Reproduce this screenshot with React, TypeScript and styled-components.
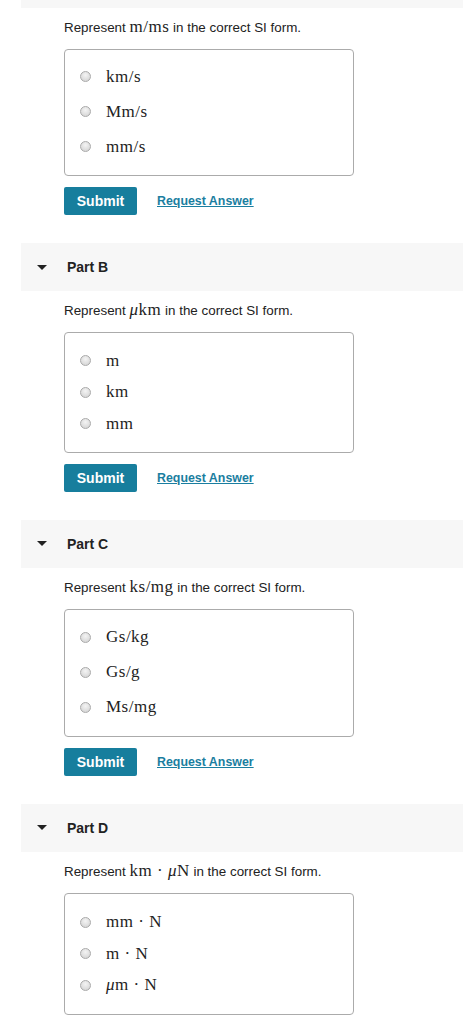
import React from 'react'
import styled, { createGlobalStyle } from 'styled-components'

const GlobalStyle = createGlobalStyle`
	body {
		margin: 0;
		background: #fff;
		font-family: "Liberation Sans", Arial, sans-serif;
		color: #222;
	}
`

const Page = styled.div`
	width: 463px;
	overflow: hidden;
`

const Part = styled.section`
	margin-left: 21px;
`

const Header = styled.div`
	height: 48px;
	background: #f7f7f7;
	display: flex;
	align-items: center;
	padding-left: 16px;
	gap: 20px;
`

const TopBar = styled.div`
	height: 8px;
	background: #f7f7f7;
`

const Caret = styled.span`
	width: 0;
	height: 0;
	border-left: 5px solid transparent;
	border-right: 5px solid transparent;
	border-top: 5px solid #222;
`

const HeaderTitle = styled.h3`
	margin: 0;
	font-size: 14px;
	font-weight: bold;
	color: #222;
`

const Body = styled.div`
	padding: 10px 0 28px 43px;
`

const Question = styled.p`
	margin: 0 0 12px;
	font-size: 13.4px;
	line-height: 18px;
	color: #222;
`

const Math = styled.span`
	font-family: "Liberation Serif", "Times New Roman", serif;
	font-size: 17px;
	letter-spacing: 0.5px;
`

const Mu = styled.i`
	font-family: "Liberation Serif", "Times New Roman", serif;
`

const Choices = styled.div<{ $padTop: number; $padBottom: number }>`
	width: 290px;
	box-sizing: border-box;
	border: 1px solid #ababab;
	border-radius: 4px;
	padding: ${p => p.$padTop}px 15px ${p => p.$padBottom}px;
`

const Choice = styled.label<{ $h: number }>`
	display: flex;
	align-items: center;
	gap: 15px;
	height: ${p => p.$h}px;
	font-family: "Liberation Serif", "Times New Roman", serif;
	font-size: 17px;
	letter-spacing: 0.5px;
	color: #222;
`

const Radio = styled.span`
	width: 11px;
	height: 11px;
	border-radius: 50%;
	box-sizing: border-box;
	border: 1px solid #aaa;
	background: radial-gradient(circle at 50% 35%, #f4f4f4 0%, #dedede 60%, #cfcfcf 100%);
	flex: none;
`

const Actions = styled.div`
	display: flex;
	align-items: center;
	gap: 20px;
	margin-top: 11px;
`

const SubmitButton = styled.button`
	height: 28px;
	width: 73px;
	border: none;
	border-radius: 2px;
	background: #177e9d;
	color: #fff;
	font-family: "Liberation Sans", Arial, sans-serif;
	font-weight: bold;
	font-size: 14px;
	padding: 0;
`

const RequestLink = styled.a`
	color: #1a7ea0;
	font-weight: bold;
	font-size: 12.4px;
	text-decoration: underline;
`

const Dot = () => <span>&nbsp;·&nbsp;</span>

type Q = {
	title?: string
	question: React.ReactNode
	options: React.ReactNode[]
	rowH: number
	padTop: number
	padBottom: number
	submit: boolean
}

const parts: Q[] = [
	{
		question: <Math>m/ms</Math>,
		options: ['km/s', 'Mm/s', 'mm/s'],
		rowH: 35, padTop: 9, padBottom: 11, submit: true,
	},
	{
		title: 'Part B',
		question: <Math><Mu>μ</Mu>km</Math>,
		options: ['m', 'km', 'mm'],
		rowH: 31.5, padTop: 12, padBottom: 12, submit: true,
	},
	{
		title: 'Part C',
		question: <Math>ks/mg</Math>,
		options: ['Gs/kg', 'Gs/g', 'Ms/mg'],
		rowH: 35, padTop: 10, padBottom: 11, submit: true,
	},
	{
		title: 'Part D',
		question: <Math>km<Dot /><Mu>μ</Mu>N</Math>,
		options: [
			<>mm<Dot />N</>,
			<>m<Dot />N</>,
			<><Mu>μ</Mu>m<Dot />N</>,
		],
		rowH: 31.5, padTop: 13, padBottom: 13, submit: false,
	},
]

const App = () => {
	return (
		<Page>
			<GlobalStyle />
			{parts.map((p, i) => (
				<Part key={i}>
					{p.title ? (
						<Header>
							<Caret />
							<HeaderTitle>{p.title}</HeaderTitle>
						</Header>
					) : <TopBar />}
					<Body>
						<Question>Represent {p.question} in the correct SI form.</Question>
						<Choices $padTop={p.padTop} $padBottom={p.padBottom}>
							{p.options.map((o, j) => (
								<Choice key={j} $h={p.rowH}>
									<Radio />
									<span>{o}</span>
								</Choice>
							))}
						</Choices>
						{p.submit && (
							<Actions>
								<SubmitButton>Submit</SubmitButton>
								<RequestLink href="#">Request Answer</RequestLink>
							</Actions>
						)}
					</Body>
				</Part>
			))}
		</Page>
	)
}

export default App
